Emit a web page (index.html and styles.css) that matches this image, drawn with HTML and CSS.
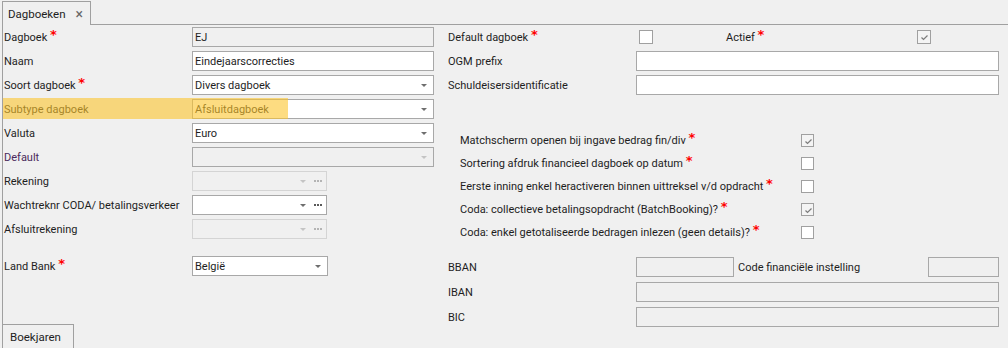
FILE: index.html
```html
<!DOCTYPE html>
<html>
<head>
    <title>Dagboeken</title>
    <link rel="stylesheet" href="styles.css">
</head>
<body>
    <div class="tabs">
        <div class="tab">Dagboeken <span class="tab-close">×</span></div>
        <div class="tabs-fill"></div>
    </div>

    <div class="panel">
        <div class="col-left">
            <div class="row">
                <div class="label">Dagboek <span class="req">*</span></div>
                <div class="field disabled">EJ</div>
            </div>
            <div class="row">
                <div class="label">Naam</div>
                <div class="field">Eindejaarscorrecties</div>
            </div>
            <div class="row">
                <div class="label">Soort dagboek <span class="req">*</span></div>
                <div class="field combo">Divers dagboek <span class="arrow"></span></div>
            </div>
            <div class="row">
                <div class="label">Subtype dagboek</div>
                <div class="field combo">Afsluitdagboek <span class="arrow"></span></div>
            </div>
            <div class="row">
                <div class="label">Valuta</div>
                <div class="field combo">Euro <span class="arrow"></span></div>
            </div>
            <div class="row">
                <div class="label label-default">Default</div>
                <div class="field combo disabled"><span class="arrow arrow-off"></span></div>
            </div>
            <div class="row">
                <div class="label">Rekening</div>
                <div class="field combo short disabled faint"><span class="arrow arrow-off"></span><span class="dots dots-off"><i></i><i></i><i></i></span></div>
            </div>
            <div class="row">
                <div class="label">Wachtreknr CODA/ betalingsverkeer</div>
                <div class="field combo short"><span class="arrow"></span><span class="dots"><i></i><i></i><i></i></span></div>
            </div>
            <div class="row">
                <div class="label">Afsluitrekening</div>
                <div class="field combo short disabled faint"><span class="arrow arrow-off"></span><span class="dots dots-off"><i></i><i></i><i></i></span></div>
            </div>

            <div class="row row-land">
                <div class="label">Land Bank <span class="req">*</span></div>
                <div class="field combo land">België <span class="arrow"></span></div>
            </div>
        </div>

        <div class="col-right">
            <div class="row">
                <div class="label">Default dagboek <span class="req">*</span></div>
                <div class="check-cell"><span class="checkbox"></span></div>
                <div class="label label-actief">Actief <span class="req">*</span></div>
                <span class="checkbox checked"><svg width="11" height="11" viewBox="0 0 11 11"><path d="M2.5 5.5 L4.5 7.5 L8.5 3.5" fill="none" stroke="#7c7c7c" stroke-width="1.2"/></svg></span>
            </div>
            <div class="row">
                <div class="label">OGM prefix</div>
                <div class="field wide"></div>
            </div>
            <div class="row">
                <div class="label">Schuldeisersidentificatie</div>
                <div class="field wide"></div>
            </div>

            <div class="checks">
                <div class="check-row">
                    <div class="check-label">Matchscherm openen bij ingave bedrag fin/div <span class="req">*</span></div>
                    <span class="checkbox checked"><svg width="11" height="11" viewBox="0 0 11 11"><path d="M2.5 5.5 L4.5 7.5 L8.5 3.5" fill="none" stroke="#7c7c7c" stroke-width="1.2"/></svg></span>
                </div>
                <div class="check-row">
                    <div class="check-label">Sortering afdruk financieel dagboek op datum <span class="req">*</span></div>
                    <span class="checkbox"></span>
                </div>
                <div class="check-row">
                    <div class="check-label">Eerste inning enkel heractiveren binnen uittreksel v/d opdracht <span class="req">*</span></div>
                    <span class="checkbox"></span>
                </div>
                <div class="check-row">
                    <div class="check-label">Coda: collectieve betalingsopdracht (BatchBooking)? <span class="req">*</span></div>
                    <span class="checkbox checked"><svg width="11" height="11" viewBox="0 0 11 11"><path d="M2.5 5.5 L4.5 7.5 L8.5 3.5" fill="none" stroke="#7c7c7c" stroke-width="1.2"/></svg></span>
                </div>
                <div class="check-row">
                    <div class="check-label">Coda: enkel getotaliseerde bedragen inlezen (geen details)? <span class="req">*</span></div>
                    <span class="checkbox"></span>
                </div>
            </div>

            <div class="bank">
                <div class="row">
                    <div class="label">BBAN</div>
                    <div class="field disabled bban"></div>
                    <div class="label-code">Code financiële instelling</div>
                    <div class="field disabled code"></div>
                </div>
                <div class="row">
                    <div class="label">IBAN</div>
                    <div class="field disabled wide"></div>
                </div>
                <div class="row">
                    <div class="label">BIC</div>
                    <div class="field disabled wide"></div>
                </div>
            </div>
        </div>

        <!-- marker over the Subtype row -->
        <div class="highlight"></div>
    </div>

    <div class="bottom-tabs">
        <div class="tab tab-bottom">Boekjaren</div>
    </div>
</body>
</html>
```

FILE: styles.css
```css
body {
    margin: 0;
    width: 1008px;
    height: 348px;
    overflow: hidden;
    background-color: #f0f0f0;
    font-family: Roboto, "Liberation Sans", sans-serif;
    font-size: 11px;
    color: #1e1e1e;
}

/* Top tab strip */
.tabs {
    display: flex;
    height: 25px;
}

.tab {
    box-sizing: border-box;
    display: flex;
    align-items: center;
    justify-content: space-between;
    width: 89px;
    margin: 1px 0 0 2px;
    padding: 0 7px 0 5px;
    border: 1px solid #a0a0a0;
    border-bottom: none;
    font-size: 11.5px;
}

.tab-close {
    color: #666;
    font-size: 14px;
}

.tabs-fill {
    flex: 1;
    border-bottom: 1px solid #a0a0a0;
}

/* Main form */
.panel {
    position: relative;
    display: flex;
    height: 299px;
    margin-left: 2px;
    border-left: 1px solid #a0a0a0;
}

.col-left {
    width: 445px;
    flex: none;
}

.col-right {
    flex: 1;
}

.row {
    display: flex;
    align-items: center;
    height: 24px;
}

.label {
    box-sizing: border-box;
    flex: none;
    width: 188px;
    white-space: nowrap;
}

.col-left .label {
    width: 189px;
    padding-left: 1px;
}

.label-default {
    color: #4b2a5c;
}

.req {
    margin-left: 0;
    color: #ff0000;
    font-family: "DejaVu Sans", sans-serif;
    font-weight: bold;
    font-size: 13px;
    line-height: 0;
    vertical-align: 2px;
}

.field {
    box-sizing: border-box;
    display: flex;
    align-items: center;
    width: 242px;
    height: 20px;
    padding: 0 2px;
    border: 1px solid #a8a8a8;
    background-color: #fff;
    white-space: nowrap;
}

.field.disabled {
    background-color: #f0f0f0;
}

.field.faint {
    border-color: #d4d4d4;
}

.field.wide {
    width: 363px;
}

.field.short {
    width: 135px;
}

.field.land {
    width: 136px;
}

.combo .arrow {
    width: 0;
    height: 0;
    margin-left: auto;
    margin-right: 4px;
    border-left: 3px solid transparent;
    border-right: 3px solid transparent;
    border-top: 3px solid #6e6e6e;
}

.combo .arrow-off {
    border-top-color: #c4c4c4;
}

.short .arrow {
    margin-right: 8px;
}

.dots {
    display: flex;
    gap: 1px;
    margin-right: 2px;
}

.dots i {
    width: 2px;
    height: 2px;
    background-color: #5a5a5a;
}

.dots-off i {
    background-color: #b4b4b4;
}

.row-land {
    margin-top: 13px;
}

/* Check boxes */
.check-cell {
    width: 90px;
    flex: none;
}

.checkbox {
    box-sizing: border-box;
    display: block;
    width: 14px;
    height: 14px;
    margin-left: 3px;
    border: 1px solid #a0a0a0;
    background-color: #fff;
}

.checkbox.checked {
    background-color: #f4f4f4;
}

.checkbox svg {
    display: block;
    margin: 1px 0 0 1px;
}

.label-actief {
    width: 188px;
}

.checks {
    margin-top: 32px;
    padding-left: 12px;
}

.check-row {
    display: flex;
    align-items: center;
    height: 23px;
}

.check-row .check-label {
    width: 341px;
    flex: none;
    white-space: nowrap;
}

.check-row .checkbox {
    width: 13px;
    height: 13px;
    margin-left: 0;
}

/* Bank data */
.bank {
    display: flex;
    flex-direction: column;
    gap: 1px;
    margin-top: 11px;
}

.field.bban {
    width: 98px;
}

.label-code {
    width: 194px;
    padding-left: 4px;
    box-sizing: border-box;
    white-space: nowrap;
}

.field.code {
    width: 71px;
}

.highlight {
    position: absolute;
    left: 0;
    top: 73px;
    width: 285px;
    height: 21px;
    background-color: rgba(252, 196, 45, 0.6);
}

/* Bottom tab */
.bottom-tabs {
    display: flex;
    height: 24px;
}

.tab-bottom {
    width: 72px;
    margin: 0 0 0 2px;
    padding-left: 7px;
    justify-content: flex-start;
}
```
